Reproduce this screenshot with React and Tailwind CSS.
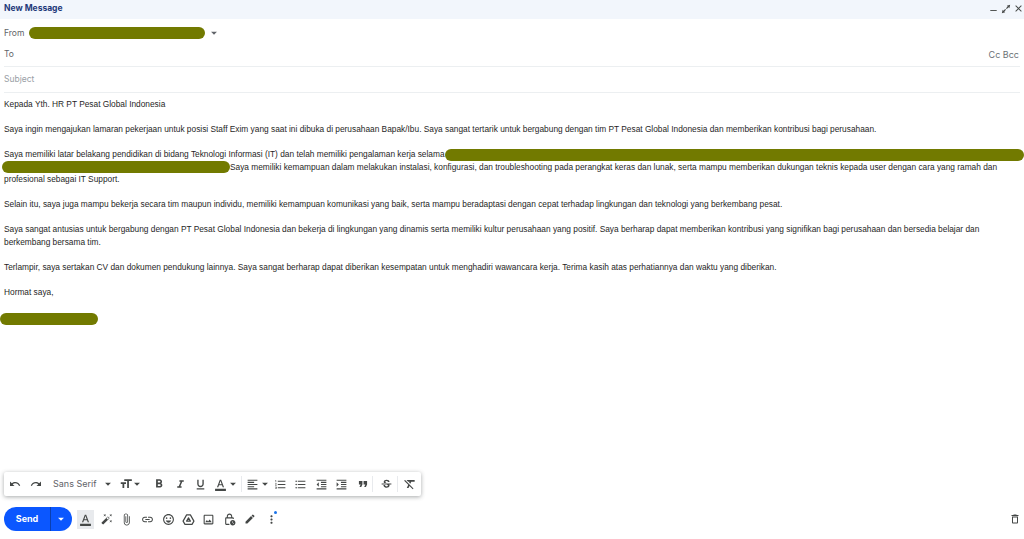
import React from "react";
import {
  MdUndo, MdRedo, MdFormatSize, MdFormatBold, MdFormatItalic, MdFormatUnderlined, MdFormatColorText,
  MdFormatAlignLeft, MdFormatListNumbered, MdFormatListBulleted, MdFormatIndentDecrease, MdFormatIndentIncrease,
  MdFormatQuote, MdStrikethroughS, MdFormatClear, MdArrowDropDown, MdAttachFile, MdLink, MdOutlineEmojiEmotions,
  MdOutlineImage, MdOutlineLockClock, MdCreate, MdMoreVert, MdOutlineDelete, MdAutoFixHigh, MdClose, MdRemove,
} from "react-icons/md";

const Blob = ({ className }) => <span className={"inline-block h-[12px] rounded-full bg-[#727a00] align-middle " + className} />;

const Drop = ({ className = "" }) => <MdArrowDropDown className={"text-[#444746] -mx-[3px] " + className} size={14} />;

const Sep = ({ className }) => <span className={"w-px h-[16px] bg-[#e8eaed] " + className} />;

const Drive = () => (
  <svg width="13" height="13" viewBox="0 0 24 24" fill="none" stroke="#444746" strokeWidth="2.2" strokeLinejoin="round">
    <path d="M8.5 3.5h7L22 15l-3.5 6h-13L2 15z" />
    <path d="M8.5 15h7l-3.5-6z" />
  </svg>
);

const Collapse = () => (
  <svg width="10" height="10" viewBox="0 0 24 24" fill="#444746">
    <path d="M22 2l-8 2 2 2-4 4 2 2 4-4 2 2zM2 22l8-2-2-2 4-4-2-2-4 4-2-2z" />
  </svg>
);

export default function App() {
  return (
    <div className="w-[1024px] h-[539px] bg-white flex flex-col overflow-hidden text-[#1f1f1f] font-['Liberation_Sans',Arial,sans-serif]">
      <div className="h-[19px] shrink-0 bg-[#f2f6fc] flex items-center justify-between pl-[4px] pb-[2px]">
        <span className="text-[8.5px] font-bold text-[#1f3a7a] font-['Inter',sans-serif]">New Message</span>
        <div className="flex items-center text-[#444746]">
          <MdRemove size={11} className="mt-[4px]" />
          <span className="ml-[2px] flex"><Collapse /></span>
          <MdClose size={11} className="ml-[2px]" />
        </div>
      </div>
      <div className="h-[28px] shrink-0 flex items-center pl-[4px] text-[8.5px] text-[#5f6368] font-['Inter',sans-serif]">
        <span className="w-[25px]">From</span>
        <Blob className="w-[176px]" />
        <MdArrowDropDown size={14} className="ml-[2px] text-[#5f6368]" />
      </div>
      <div className="h-[20px] mx-[4px] shrink-0 flex items-center justify-between border-b border-[#eceff1] text-[8.5px] text-[#5f6368] font-['Inter',sans-serif]">
        <span className="-mt-[4px]">To</span>
        <span className="text-[9px] text-[#6b7075] -mt-[4px] mr-[1px]">Cc Bcc</span>
      </div>
      <div className="h-[26px] mx-[4px] shrink-0 flex items-center border-b border-[#eceff1] text-[8.5px] text-[#9aa0a6] font-['Inter',sans-serif]">Subject</div>

      <div className="flex-1 min-h-0 pl-[4px] pr-[20px] pt-[5px] text-[8.33px] leading-[12.5px] text-[#1f1f1f]">
        <p className="mb-[12.5px]">Kepada Yth. HR PT Pesat Global Indonesia</p>
        <p className="mb-[12.5px]">Saya ingin mengajukan lamaran pekerjaan untuk posisi Staff Exim yang saat ini dibuka di perusahaan Bapak/Ibu. Saya sangat tertarik untuk bergabung dengan tim PT Pesat Global Indonesia dan memberikan kontribusi bagi perusahaan.</p>
        <p className="mb-[12.5px]">
          <span className="block whitespace-nowrap h-[12.5px]">
            Saya memiliki latar belakang pendidikan di bidang Teknologi Informasi (IT) dan telah memiliki pengalaman kerja selama<Blob className="w-[579px]" />
          </span>
          <Blob className="w-[228px] -ml-[2px]" />
          Saya memiliki kemampuan dalam melakukan instalasi, konfigurasi, dan troubleshooting pada perangkat keras dan lunak, serta mampu memberikan dukungan teknis kepada user dengan cara yang ramah dan profesional sebagai IT Support.
        </p>
        <p className="mb-[12.5px]">Selain itu, saya juga mampu bekerja secara tim maupun individu, memiliki kemampuan komunikasi yang baik, serta mampu beradaptasi dengan cepat terhadap lingkungan dan teknologi yang berkembang pesat.</p>
        <p className="mb-[12.5px]">Saya sangat antusias untuk bergabung dengan PT Pesat Global Indonesia dan bekerja di lingkungan yang dinamis serta memiliki kultur perusahaan yang positif. Saya berharap dapat memberikan kontribusi yang signifikan bagi perusahaan dan bersedia belajar dan berkembang bersama tim.</p>
        <p className="mb-[12.5px]">Terlampir, saya sertakan CV dan dokumen pendukung lainnya. Saya sangat berharap dapat diberikan kesempatan untuk menghadiri wawancara kerja. Terima kasih atas perhatiannya dan waktu yang diberikan.</p>
        <p className="mb-[14px]">Hormat saya,</p>
        <Blob className="w-[98px] -ml-[4px] block" />
      </div>

      <div className="shrink-0 ml-[4px] mb-[11px] w-[417px] h-[24px] bg-white rounded-[2px] shadow-[0_1px_4px_rgba(60,64,67,0.45)] flex items-center pl-[5px] text-[#444746]">
        <MdUndo size={12} />
        <MdRedo size={12} className="ml-[9px]" />
        <span className="ml-[11px] text-[9px] text-[#5f6368] font-['Inter',sans-serif] w-[51px]">Sans Serif</span>
        <Drop />
        <MdFormatSize size={14} className="ml-[7px]" />
        <Drop />
        <MdFormatBold size={14} className="ml-[11px]" />
        <MdFormatItalic size={13} className="ml-[8px]" />
        <MdFormatUnderlined size={13} className="ml-[7px]" />
        <MdFormatColorText size={13} className="ml-[7px]" />
        <Drop className="ml-[-1px]" />
        <Sep className="ml-[4px]" />
        <MdFormatAlignLeft size={13} className="ml-[4px]" />
        <Drop className="ml-[-1px]" />
        <MdFormatListNumbered size={13} className="ml-[5px]" />
        <MdFormatListBulleted size={13} className="ml-[7px]" />
        <MdFormatIndentDecrease size={13} className="ml-[8px]" />
        <MdFormatIndentIncrease size={13} className="ml-[7px]" />
        <MdFormatQuote size={14} className="ml-[8px]" />
        <Sep className="ml-[2px]" />
        <MdStrikethroughS size={13} className="ml-[7px]" />
        <Sep className="ml-[4px]" />
        <MdFormatClear size={14} className="ml-[5px]" />
      </div>

      <div className="shrink-0 h-[24px] mb-[8px] ml-[4px] mr-[3px] flex items-center text-[#444746]">
        <div className="h-[24px] w-[68px] rounded-full bg-[#0b57ff] flex items-center text-white">
          <span className="w-[46px] text-center text-[9px] font-bold font-['Inter',sans-serif]">Send</span>
          <span className="h-full w-px bg-[#0a3fb0]" />
          <MdArrowDropDown size={14} className="ml-[3px]" />
        </div>
        <span className="ml-[5px] w-[17px] h-[19px] bg-[#e8eaed] flex items-center justify-center"><MdFormatColorText size={13} /></span>
        <MdAutoFixHigh size={12} className="ml-[7px]" />
        <MdAttachFile size={13} className="ml-[7px]" />
        <MdLink size={13} className="ml-[8px]" />
        <MdOutlineEmojiEmotions size={13} className="ml-[8px]" />
        <span className="ml-[7px] flex"><Drive /></span>
        <MdOutlineImage size={13} className="ml-[7px]" />
        <MdOutlineLockClock size={13} className="ml-[8px]" />
        <MdCreate size={12} className="ml-[8px]" />
        <span className="relative ml-[9px] flex">
          <MdMoreVert size={13} />
          <span className="absolute -top-[2px] left-[9px] w-[3px] h-[3px] rounded-full bg-[#1a73e8]" />
        </span>
        <MdOutlineDelete size={12} className="ml-auto" />
      </div>
    </div>
  );
}
